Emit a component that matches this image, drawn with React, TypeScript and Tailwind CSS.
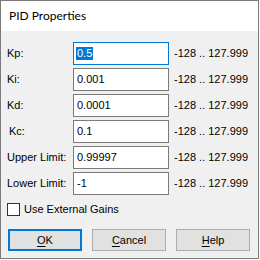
import React from 'react';

const rows = [
  { label: 'Kp:', value: '0.5', focused: true, indent: false },
  { label: 'Ki:', value: '0.001', focused: false, indent: false },
  { label: 'Kd:', value: '0.0001', focused: false, indent: false },
  { label: 'Kc:', value: '0.1', focused: false, indent: true },
  { label: 'Upper Limit:', value: '0.99997', focused: false, indent: false },
  { label: 'Lower Limit:', value: '-1', focused: false, indent: false },
];

function Button({ first, rest, isDefault }: { first: string; rest: string; isDefault?: boolean }) {
  return (
    <button
      className={`w-[74px] h-[22px] bg-[#e1e1e1] text-black text-[11px] leading-none flex items-center justify-center ${
        isDefault ? 'border-2 border-[#0078d7]' : 'border border-[#adadad]'
      }`}
    >
      <span>
        <span className="underline underline-offset-[2px]">{first}</span>
        {rest}
      </span>
    </button>
  );
}

export default function App() {
  return (
    <div className="w-[260px] h-[260px] bg-white" style={{ fontFamily: '"Liberation Sans", Arial, sans-serif' }}>
      <div className="w-[259px] h-[259px] border border-[#7a7a7a] bg-[#f0f0f0] flex flex-col">
        <div className="h-[30px] bg-white flex items-center pl-[8px] text-[12px] text-black" style={{ fontFamily: 'Lato, sans-serif' }}>
          PID Properties
        </div>
        <div className="flex flex-col pt-[11px] pl-[6px] text-[11px] text-black">
          <div className="flex flex-col gap-[3px]">
            {rows.map((r) => (
              <div key={r.label} className="flex items-center h-[23px]">
                <div className={`w-[66px] ${r.indent ? 'pl-[2px]' : ''}`}>{r.label}</div>
                <div
                  className={`w-[96px] h-[23px] bg-white flex items-center pl-[2px] border ${
                    r.focused ? 'border-[#0078d7]' : 'border-[#7a7a7a]'
                  }`}
                >
                  {r.focused ? (
                    <span className="bg-[#0078d7] text-white px-[1px] leading-[13px]">{r.value}</span>
                  ) : (
                    <span className="px-[1px]">{r.value}</span>
                  )}
                </div>
                <div className="ml-[5px]">-128 .. 127.999</div>
              </div>
            ))}
          </div>
          <label className="flex items-center mt-[8px] h-[13px]">
            <span className="w-[13px] h-[13px] bg-white border border-[#333333]" />
            <span className="ml-[4px]">Use External Gains</span>
          </label>
          <div className="flex gap-[10px] mt-[13px] pl-[1px]">
            <Button first="O" rest="K" isDefault />
            <Button first="C" rest="ancel" />
            <Button first="H" rest="elp" />
          </div>
        </div>
      </div>
    </div>
  );
}
